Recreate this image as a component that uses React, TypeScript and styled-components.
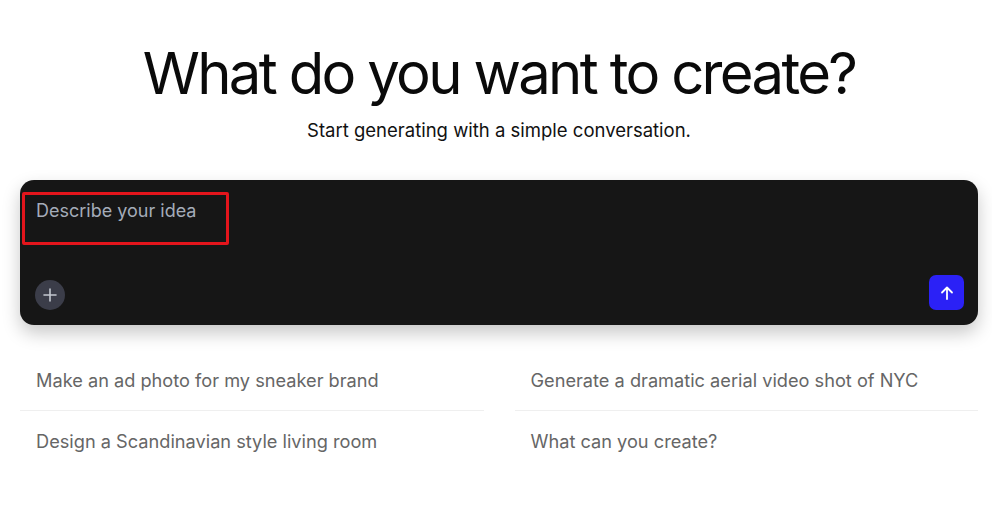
import React from "react";
import styled, { createGlobalStyle } from "styled-components";

const Global = createGlobalStyle`
  html, body { margin: 0; padding: 0; background: #ffffff; }
  body { font-family: Inter, "Noto Sans", sans-serif; -webkit-font-smoothing: antialiased; }
  * { box-sizing: border-box; }
`;

const Page = styled.main`
  width: 992px;
  height: 511px;
  overflow: hidden;
  padding: 37px 14px 0 20px;
  display: flex;
  flex-direction: column;
  align-items: stretch;
`;

const Header = styled.header`
  display: flex;
  flex-direction: column;
  align-items: center;
`;

const Title = styled.h1`
  margin: 0;
  font-family: Inter, sans-serif;
  font-weight: 400;
  font-size: 58px;
  line-height: 72px;
  letter-spacing: -0.046em;
  color: #0a0a0a;
`;

const Subtitle = styled.p`
  margin: 10px 0 0;
  font-family: Inter, sans-serif;
  font-size: 18.5px;
  line-height: 22px;
  color: #111;
`;

const Composer = styled.section`
  margin-top: 39px;
  height: 145px;
  background: #161616;
  border-radius: 14px;
  box-shadow: 0 8px 18px rgba(0, 0, 0, 0.22);
  padding: 12px 14px 15px 15px;
  display: flex;
  flex-direction: column;
  justify-content: space-between;
`;

const PromptBox = styled.div`
  width: 207px;
  height: 53px;
  margin-left: -13px;
  border: 3px solid #e3151c;
  border-radius: 2px;
  padding: 4px 0 0 11px;
`;

const Placeholder = styled.span`
  font-family: Inter, sans-serif;
  font-size: 18px;
  line-height: 24px;
  color: #a4acb9;
`;

const Actions = styled.div`
  display: flex;
  align-items: center;
  justify-content: space-between;
`;

const AddButton = styled.button`
  width: 30px;
  height: 30px;
  margin-bottom: -5px;
  border-radius: 50%;
  border: none;
  background: #3b3d49;
  display: grid;
  place-items: center;
  padding: 0;
`;

const SendButton = styled.button`
  width: 35px;
  height: 35px;
  border-radius: 7px;
  border: none;
  background: #2b21f6;
  display: grid;
  place-items: center;
  padding: 0;
`;

const Suggestions = styled.div`
  margin-top: 25px;
  display: grid;
  grid-template-columns: 1fr 1fr;
  column-gap: 31px;
`;

const Suggestion = styled.div<{ $divider?: boolean }>`
  height: 61px;
  display: flex;
  align-items: center;
  padding-left: 16px;
  font-family: Inter, sans-serif;
  font-size: 18.2px;
  color: #666666;
  border-bottom: 1px solid ${(p) => (p.$divider ? "#efefef" : "transparent")};
`;

const items = [
  "Make an ad photo for my sneaker brand",
  "Generate a dramatic aerial video shot of NYC",
  "Design a Scandinavian style living room",
  "What can you create?",
];

export default function App() {
  return (
    <>
      <Global />
      <Page>
        <Header>
          <Title>What do you want to create?</Title>
          <Subtitle>Start generating with a simple conversation.</Subtitle>
        </Header>
        <Composer>
          <PromptBox>
            <Placeholder>Describe your idea</Placeholder>
          </PromptBox>
          <Actions>
            <AddButton aria-label="Add">
              <svg width="14" height="14" viewBox="0 0 14 14" fill="none">
                <path d="M7 1v12M1 7h12" stroke="#c4c8d0" strokeWidth="1.6" strokeLinecap="round" />
              </svg>
            </AddButton>
            <SendButton aria-label="Send">
              <svg width="16" height="16" viewBox="0 0 16 16" fill="none">
                <path d="M8 14V2.5M3 7.5l5-5 5 5" stroke="#ffffff" strokeWidth="1.8" strokeLinecap="round" strokeLinejoin="round" />
              </svg>
            </SendButton>
          </Actions>
        </Composer>
        <Suggestions>
          {items.map((t, i) => (
            <Suggestion key={t} $divider={i < 2}>
              {t}
            </Suggestion>
          ))}
        </Suggestions>
      </Page>
    </>
  );
}
